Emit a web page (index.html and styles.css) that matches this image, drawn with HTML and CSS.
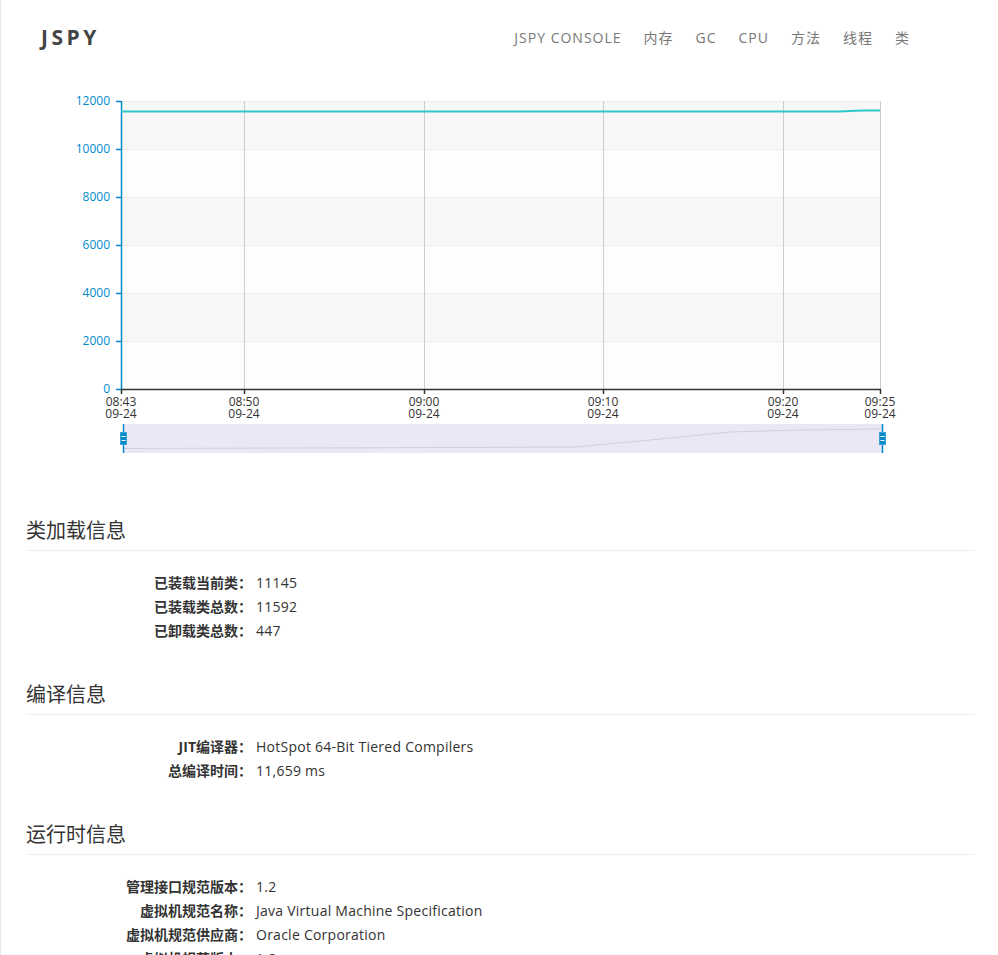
FILE: index.html
```html
<!DOCTYPE html>
<html lang="zh-CN">
<head>
<meta charset="utf-8">
<title>JSPY - 类</title>
<link rel="stylesheet" href="styles.css">
</head>
<body>
<header class="topbar">
  <div class="brand">JSPY</div>
  <nav class="nav">
    <a href="#">JSPY CONSOLE</a>
    <a href="#">内存</a>
    <a href="#">GC</a>
    <a href="#">CPU</a>
    <a href="#">方法</a>
    <a href="#">线程</a>
    <a href="#">类</a>
  </nav>
</header>

<div class="chart">
  <svg class="chart-svg" width="998" height="404" viewBox="0 0 998 404">
    <!-- split areas -->
    <rect x="121" y="26" width="759" height="48" fill="#f7f7f7"/>
    <rect x="121" y="74" width="759" height="48" fill="#fdfdfd"/>
    <rect x="121" y="122" width="759" height="48" fill="#f7f7f7"/>
    <rect x="121" y="170" width="759" height="48" fill="#fdfdfd"/>
    <rect x="121" y="218" width="759" height="48" fill="#f7f7f7"/>
    <rect x="121" y="266" width="759" height="48" fill="#fdfdfd"/>
    <!-- horizontal split lines -->
    <g stroke="#ececec" stroke-width="1">
      <line x1="121" y1="26.5" x2="880" y2="26.5"/>
      <line x1="121" y1="74.5" x2="880" y2="74.5"/>
      <line x1="121" y1="122.5" x2="880" y2="122.5"/>
      <line x1="121" y1="170.5" x2="880" y2="170.5"/>
      <line x1="121" y1="218.5" x2="880" y2="218.5"/>
      <line x1="121" y1="266.5" x2="880" y2="266.5"/>
    </g>
    <!-- vertical split lines -->
    <g stroke="#cccccc" stroke-width="1">
      <line x1="244.5" y1="26" x2="244.5" y2="314"/>
      <line x1="424.5" y1="26" x2="424.5" y2="314"/>
      <line x1="603.5" y1="26" x2="603.5" y2="314"/>
      <line x1="783.5" y1="26" x2="783.5" y2="314"/>
      <line x1="880.5" y1="26" x2="880.5" y2="314"/>
    </g>
    <!-- y axis -->
    <g stroke="#008acd" stroke-width="1.5">
      <line x1="121.5" y1="26" x2="121.5" y2="314"/>
      <line x1="116" y1="26.5" x2="121" y2="26.5"/>
      <line x1="116" y1="74.5" x2="121" y2="74.5"/>
      <line x1="116" y1="122.5" x2="121" y2="122.5"/>
      <line x1="116" y1="170.5" x2="121" y2="170.5"/>
      <line x1="116" y1="218.5" x2="121" y2="218.5"/>
      <line x1="116" y1="266.5" x2="121" y2="266.5"/>
      <line x1="116" y1="314.5" x2="121" y2="314.5"/>
    </g>
    <g class="ylabel" text-anchor="end">
      <text x="110" y="30">12000</text>
      <text x="110" y="78">10000</text>
      <text x="110" y="126">8000</text>
      <text x="110" y="174">6000</text>
      <text x="110" y="222">4000</text>
      <text x="110" y="270">2000</text>
      <text x="110" y="318">0</text>
    </g>
    <!-- x axis -->
    <g stroke="#333333" stroke-width="1.5">
      <line x1="121" y1="314.5" x2="881" y2="314.5"/>
      <line x1="121.5" y1="314" x2="121.5" y2="319"/>
      <line x1="244.5" y1="314" x2="244.5" y2="319"/>
      <line x1="424.5" y1="314" x2="424.5" y2="319"/>
      <line x1="603.5" y1="314" x2="603.5" y2="319"/>
      <line x1="783.5" y1="314" x2="783.5" y2="319"/>
      <line x1="880.5" y1="314" x2="880.5" y2="319"/>
    </g>
    <g class="xlabel" text-anchor="middle">
      <text x="121" y="331">08:43</text><text x="121" y="343">09-24</text>
      <text x="244" y="331">08:50</text><text x="244" y="343">09-24</text>
      <text x="424" y="331">09:00</text><text x="424" y="343">09-24</text>
      <text x="603" y="331">09:10</text><text x="603" y="343">09-24</text>
      <text x="783" y="331">09:20</text><text x="783" y="343">09-24</text>
      <text x="880" y="331">09:25</text><text x="880" y="343">09-24</text>
    </g>
    <!-- series -->
    <path d="M121 36.6 L800 36.5 L840 36.4 L855 35.8 L865 35.5 L880 35.5" fill="none" stroke="#2ec7c9" stroke-width="2"/>
    <!-- data zoom -->
    <rect x="123" y="349" width="759" height="29" fill="#ebe8f5"/>
    <path d="M123 373.5 L300 373 L450 372.5 L575 372 L650 365 L730 357 L800 355 L882 354" fill="none" stroke="#d2cde3" stroke-width="1"/>
    <g>
      <line x1="123.5" y1="349" x2="123.5" y2="378" stroke="#008acd" stroke-width="1.5"/>
      <rect x="120.5" y="357.5" width="6" height="12" fill="#008acd" stroke="#3aa3db" stroke-width="1"/>
      <line x1="121.5" y1="361.5" x2="125.5" y2="361.5" stroke="#ffffff" stroke-width="1"/>
      <line x1="121.5" y1="365.5" x2="125.5" y2="365.5" stroke="#ffffff" stroke-width="1"/>
      <line x1="882.5" y1="349" x2="882.5" y2="378" stroke="#008acd" stroke-width="1.5"/>
      <rect x="879.5" y="357.5" width="6" height="12" fill="#008acd" stroke="#3aa3db" stroke-width="1"/>
      <line x1="880.5" y1="361.5" x2="884.5" y2="361.5" stroke="#ffffff" stroke-width="1"/>
      <line x1="880.5" y1="365.5" x2="884.5" y2="365.5" stroke="#ffffff" stroke-width="1"/>
    </g>
  </svg>
</div>

<main class="content">
  <section class="info">
    <h2 class="info-title">类加载信息</h2>
    <dl class="rows">
      <div class="row"><dt>已装载当前类：</dt><dd>11145</dd></div>
      <div class="row"><dt>已装载类总数：</dt><dd>11592</dd></div>
      <div class="row"><dt>已卸载类总数：</dt><dd>447</dd></div>
    </dl>
  </section>
  <section class="info">
    <h2 class="info-title">编译信息</h2>
    <dl class="rows">
      <div class="row"><dt>JIT编译器：</dt><dd>HotSpot 64-Bit Tiered Compilers</dd></div>
      <div class="row"><dt>总编译时间：</dt><dd>11,659 ms</dd></div>
    </dl>
  </section>
  <section class="info">
    <h2 class="info-title">运行时信息</h2>
    <dl class="rows">
      <div class="row"><dt>管理接口规范版本：</dt><dd>1.2</dd></div>
      <div class="row"><dt>虚拟机规范名称：</dt><dd>Java Virtual Machine Specification</dd></div>
      <div class="row"><dt>虚拟机规范供应商：</dt><dd>Oracle Corporation</dd></div>
      <div class="row"><dt>虚拟机规范版本：</dt><dd>1.8</dd></div>
    </dl>
  </section>
</main>
</body>
</html>
```

FILE: styles.css
```css
* { box-sizing: border-box; }

html, body {
  margin: 0;
  padding: 0;
  background: #ffffff;
}

body {
  font-family: "Open Sans", "Noto Sans CJK SC", sans-serif;
  color: #333333;
  box-shadow: inset 1px 0 0 #e6e6e6;
  min-height: 955px;
}

.topbar {
  height: 75px;
  display: flex;
  align-items: center;
  justify-content: space-between;
  padding: 0 88px 0 41px;
}

.brand {
  font-size: 21px;
  font-weight: 700;
  letter-spacing: 3.5px;
  color: #444444;
  line-height: 1;
}

.nav {
  display: flex;
  gap: 22px;
}

.nav a {
  font-size: 14px;
  letter-spacing: 1px;
  color: #777777;
  text-decoration: none;
  line-height: 20px;
}

.chart {
  height: 404px;
}

.chart-svg {
  display: block;
}

.ylabel text {
  font-family: "Open Sans", sans-serif;
  font-size: 12px;
  fill: #008acd;
}

.xlabel text {
  font-family: "Open Sans", sans-serif;
  font-size: 12px;
  fill: #333333;
}

.content {
  padding: 0 23px 0 26px;
}

.info {
  margin-top: 38px;
}

.info-title {
  margin: 0;
  font-size: 20px;
  font-weight: 400;
  line-height: 28px;
  color: #333333;
  padding-bottom: 5px;
  border-bottom: 1px solid #eeeeee;
}

.rows {
  margin: 20px 0 0 0;
}

.row {
  display: grid;
  grid-template-columns: 226px 1fr;
  column-gap: 4px;
  line-height: 24px;
  font-size: 14px;
}

.row dt {
  text-align: right;
  font-weight: 700;
  color: #333333;
}

.row dd {
  margin: 0;
  color: #333333;
  letter-spacing: 0.25px;
}
```
